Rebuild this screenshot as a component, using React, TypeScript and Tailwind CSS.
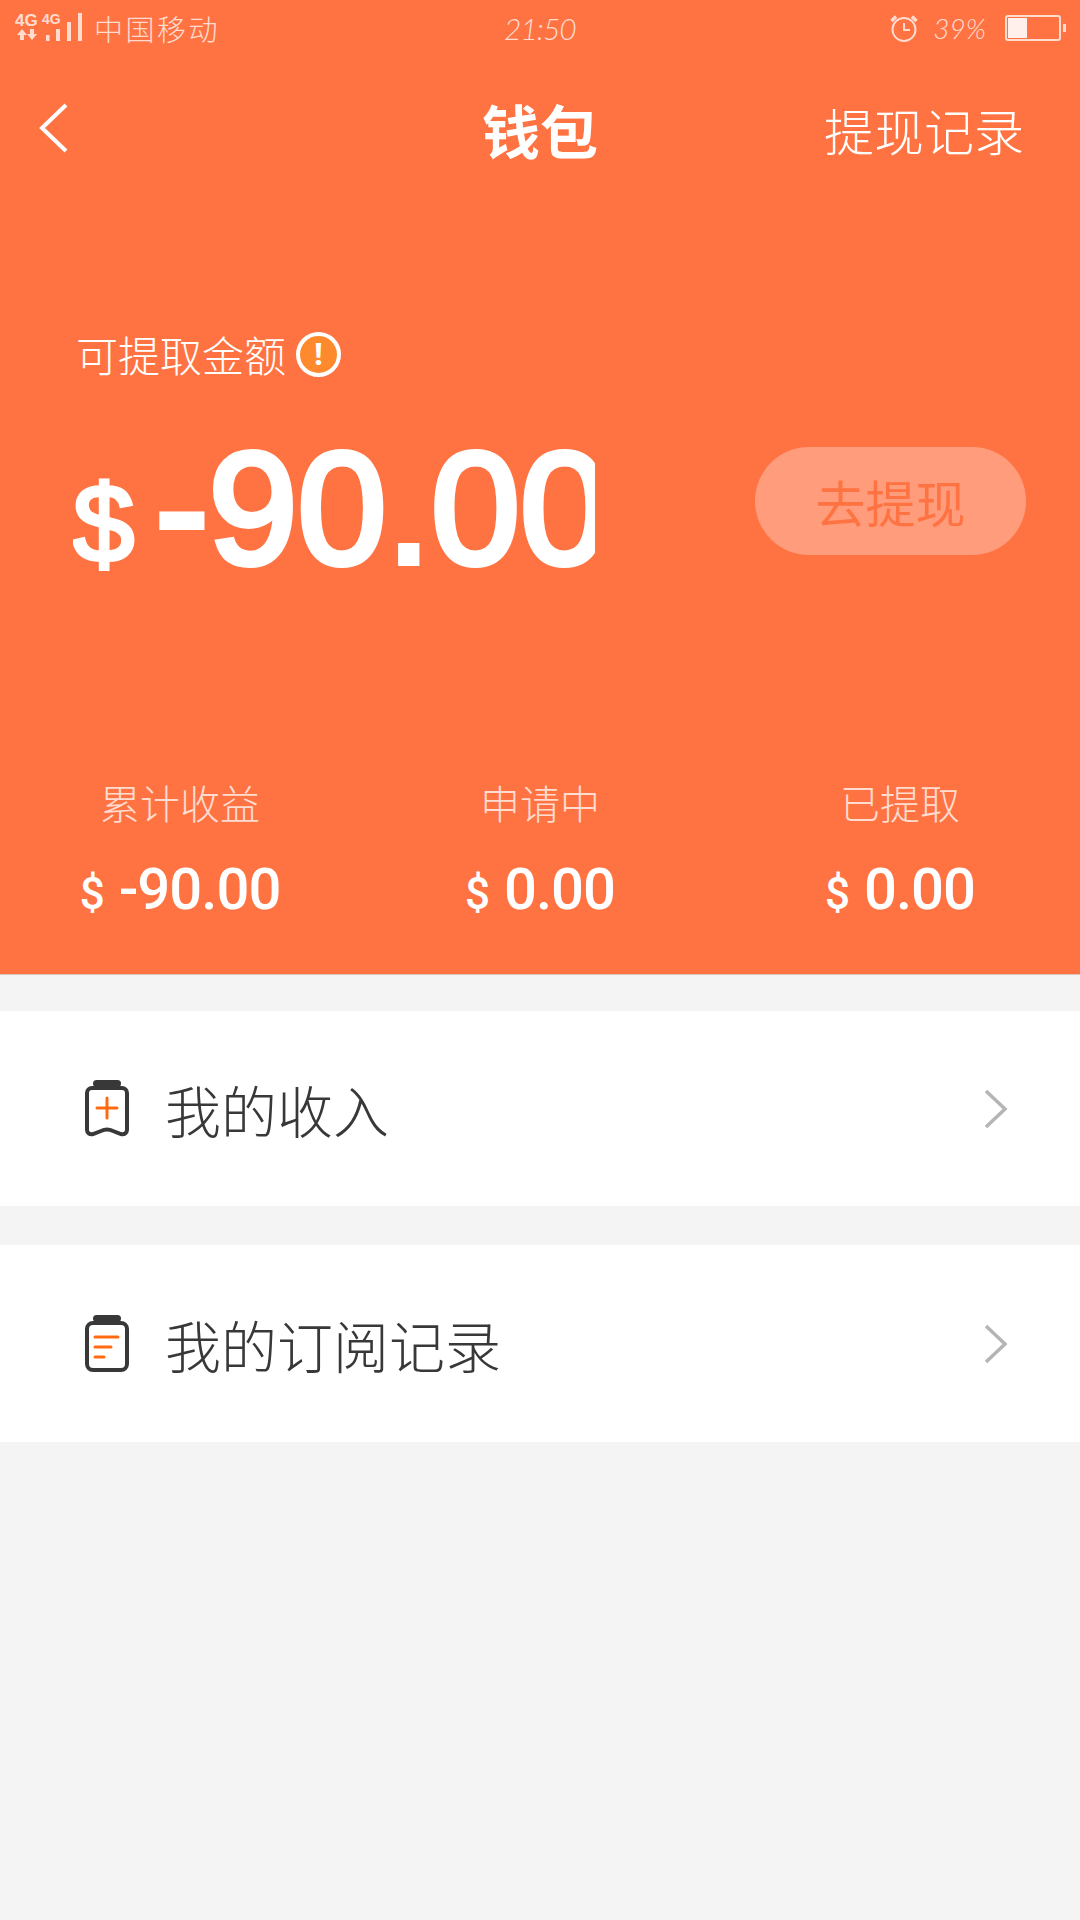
import React from "react";

const HAND = "font-['Noto_Sans_CJK_SC',sans-serif] font-light";

function StatusBar() {
  return (
    <div className="flex h-[56px] items-center justify-between pl-[15px] pr-[14px] text-[#ffdccf]">
      <div className="flex items-center">
        <div className="relative h-[32px] w-[68px] font-['Liberation_Sans',sans-serif] font-bold leading-none">
          <span className="absolute left-0 top-0 text-[17px]">4G</span>
          <span className="absolute left-[27px] top-0 text-[14px]">4G</span>
          <svg viewBox="0 0 68 32" className="absolute inset-0 h-[32px] w-[68px]" fill="currentColor">
            <path d="M7 17l-5 6h3v5h4v-5h3zM17 28l5-6h-3v-5h-4v5h-3z" />
            <rect x="31" y="23" width="3.500" height="6" />
            <rect x="41" y="17" width="4" height="12" />
            <rect x="52" y="10" width="4" height="19" />
            <rect x="63" y="1" width="4" height="28" />
          </svg>
        </div>
        <span className={`${HAND} ml-[11px] text-[29px] leading-none tracking-[2.5px]`}>中国移动</span>
      </div>
      <span className="absolute left-[504px] font-['Lato',sans-serif] text-[30px] font-light italic leading-none tracking-[-1px]">21:50</span>
      <div className="flex items-center">
        <svg viewBox="0 0 28 28" className="h-[28px] w-[28px]" fill="none" stroke="currentColor" strokeWidth="2">
          <circle cx="14" cy="15.5" r="11.5" />
          <path d="M14 9v7h6" />
          <path d="M1.5 7L6 2.5M26.500 7L22 2.500" strokeWidth="3.500" />
        </svg>
        <span className="ml-[15px] font-['Lato',sans-serif] text-[28px] font-light italic leading-none">39%</span>
        <div className="ml-[19px] flex items-center">
          <div className="h-[26px] w-[56px] rounded-[3px] border-2 border-[#ffdccf] p-[1px]">
            <div className="h-full w-[19px] bg-[#fff0eb]" />
          </div>
          <div className="ml-[2px] h-[8px] w-[3px] bg-[#ffdccf]" />
        </div>
      </div>
    </div>
  );
}

function NavBar() {
  return (
    <div className="relative flex h-[154px] items-center justify-between pb-[10px] pl-[39px] pr-[56px] text-white">
      <svg viewBox="0 0 30 50" className="h-[50px] w-[30px]" fill="none" stroke="currentColor" strokeWidth="4">
        <path d="M27 2L3 25l24 23" />
      </svg>
      <span className="absolute left-0 right-0 top-[38px] text-center font-['Noto_Sans_CJK_SC',sans-serif] text-[58px] font-bold leading-[70px]">
        钱包
      </span>
      <span className={`${HAND} mt-[2px] text-[50px] leading-none`}>提现记录</span>
    </div>
  );
}

function Stat({ label, value }: { label: string; value: string }) {
  return (
    <div className="flex flex-col items-center">
      <span className={`${HAND} text-[40px] leading-[52px] text-[#ffdccf]`}>{label}</span>
      <div className="mt-[31px] flex items-baseline font-['Roboto',sans-serif] font-medium leading-[60px] text-white">
        <span className="mr-[14px] text-[44px]">$</span>
        <span className="text-[58px] tracking-[-1px]">{value}</span>
      </div>
    </div>
  );
}

function BottleIcon({ kind }: { kind: "plus" | "list" }) {
  return (
    <svg viewBox="0 0 44 57" className="h-[57px] w-[44px]" fill="none">
      <rect x="8" y="0" width="28" height="7" rx="3.500" fill="#383838" />
      {kind === "plus" ? (
        <>
          <path
            d="M7 8h30a5 5 0 0 1 5 5v37c0 3-3 5-6 4l-8-3c-4-2-8-2-12 0l-8 3c-3 1-6-1-6-4V13a5 5 0 0 1 5-5z"
            stroke="#383838"
            strokeWidth="4"
          />
          <path d="M12 28h20M22 18v20" stroke="#ff6a13" strokeWidth="3" strokeLinecap="round" />
        </>
      ) : (
        <>
          <rect x="2" y="8" width="40" height="47" rx="6" stroke="#383838" strokeWidth="4" />
          <path d="M10 22h23M10 32h16M10 42h9" stroke="#ff6a13" strokeWidth="3" strokeLinecap="round" />
        </>
      )}
    </svg>
  );
}

function MenuRow({ icon, title, height }: { icon: "plus" | "list"; title: string; height: string }) {
  return (
    <div className={`flex items-center justify-between bg-white pl-[85px] pr-[72px] ${height}`}>
      <div className="flex items-center">
        <BottleIcon kind={icon} />
        <span className={`${HAND} ml-[36px] text-[56px] leading-none text-[#383838]`}>{title}</span>
      </div>
      <svg viewBox="0 0 24 40" className="h-[40px] w-[24px]" fill="none" stroke="#b5b5b5" strokeWidth="3.500">
        <path d="M2 2l19 18L2 38" />
      </svg>
    </div>
  );
}

export default function App() {
  return (
    <div className="relative h-[1920px] w-[1080px] overflow-hidden bg-[#f4f4f4]">
      <div className="h-[975px] border-b border-[#d9c4bb] bg-[#ff7343]">
        <StatusBar />
        <NavBar />

        <div className="mt-[118px] flex items-center pl-[76px] text-white">
          <span className={`${HAND} text-[42px] leading-[52px]`}>可提取金额</span>
          <div className="ml-[10px] flex h-[45px] w-[45px] items-center justify-center rounded-full border-[4px] border-white bg-[#ff8a2e] text-[30px] font-bold leading-none">
            !
          </div>
        </div>

        <div className="mt-[46px] flex items-center">
          <div className="ml-[73px] flex h-[160px] w-[522px] items-center overflow-hidden font-['Liberation_Sans',sans-serif] text-white [-webkit-text-stroke:6px_white]">
            <span className="mt-[36px] text-[110px] leading-none [-webkit-text-stroke:4px_white]">$</span>
            <span className="ml-[21px] mt-[3px] whitespace-nowrap text-[160px] leading-none">-90.00</span>
          </div>
          <button className="mb-[10px] ml-[160px] flex h-[108px] w-[271px] items-center justify-center rounded-full bg-[#ff9c7b]">
            <span className="font-['Noto_Sans_CJK_SC',sans-serif] text-[50px] leading-none text-[#ff7343]">去提现</span>
          </button>
        </div>

        <div className="mt-[190px] grid grid-cols-3">
          <Stat label="累计收益" value="-90.00" />
          <Stat label="申请中" value="0.00" />
          <Stat label="已提取" value="0.00" />
        </div>
      </div>

      <div className="mt-[36px]">
        <MenuRow icon="plus" title="我的收入" height="h-[195px]" />
      </div>
      <div className="mt-[39px]">
        <MenuRow icon="list" title="我的订阅记录" height="h-[197px]" />
      </div>
    </div>
  );
}
